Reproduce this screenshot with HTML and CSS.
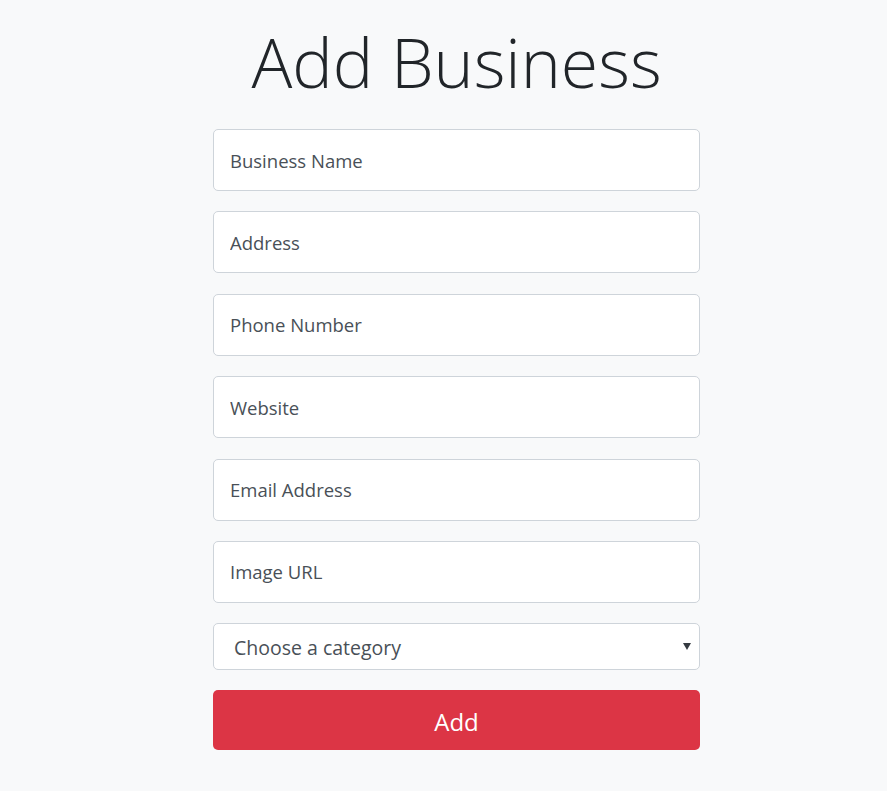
FILE: index.html
```html
<!DOCTYPE html>
<html lang="en">
<head>
<meta charset="utf-8">
<title>Add Business</title>
<link rel="stylesheet" href="styles.css">
</head>
<body>
<main class="page">
  <h1 class="title">Add Business</h1>
  <form class="form">
    <input class="field" type="text" placeholder="Business Name">
    <input class="field" type="text" placeholder="Address">
    <input class="field" type="text" placeholder="Phone Number">
    <input class="field" type="text" placeholder="Website">
    <input class="field" type="text" placeholder="Email Address">
    <input class="field" type="text" placeholder="Image URL">
    <div class="select-wrap">
      <select class="select">
        <option>Choose a category</option>
      </select>
      <span class="caret"></span>
    </div>
    <button class="btn" type="button">Add</button>
  </form>
</main>
</body>
</html>
```
FILE: styles.css
```css
html, body {
  margin: 0;
  padding: 0;
  background: #f8f9fa;
}
body {
  font-family: "Open Sans", "Noto Sans", sans-serif;
  color: #212529;
}
.page {
  width: 487px;
  margin-left: 213px;
  display: flex;
  flex-direction: column;
}
.title {
  margin: 14px 0 0;
  font-size: 68px;
  font-weight: 300;
  line-height: 96px;
  text-align: center;
  color: #212529;
  white-space: nowrap;
}
.form {
  margin-top: 19px;
  display: flex;
  flex-direction: column;
  gap: 20.4px;
}
.field {
  box-sizing: border-box;
  height: 62px;
  width: 100%;
  padding: 0 16px;
  border: 1px solid #ced4da;
  border-radius: 5px;
  background: #fff;
  font-family: inherit;
  font-size: 18.5px;
  color: #495057;
  outline: none;
}
.field::placeholder {
  color: #495057;
  opacity: 1;
}
.select-wrap {
  position: relative;
}
.select {
  box-sizing: border-box;
  width: 100%;
  height: 46.5px;
  padding: 2px 16px 0 20px;
  border: 1px solid #ced4da;
  border-radius: 5px;
  background: #fff;
  font-family: inherit;
  font-size: 19.5px;
  color: #495057;
  appearance: none;
  -webkit-appearance: none;
  outline: none;
}
.caret {
  position: absolute;
  right: 9px;
  top: 20px;
  width: 0;
  height: 0;
  border-left: 4px solid transparent;
  border-right: 4px solid transparent;
  border-top: 7px solid #343a40;
}
.btn {
  height: 60px;
  width: 100%;
  padding-top: 3px;
  border: none;
  border-radius: 5px;
  background: #dc3545;
  color: #fff;
  font-family: inherit;
  font-size: 24px;
  cursor: pointer;
}
```
